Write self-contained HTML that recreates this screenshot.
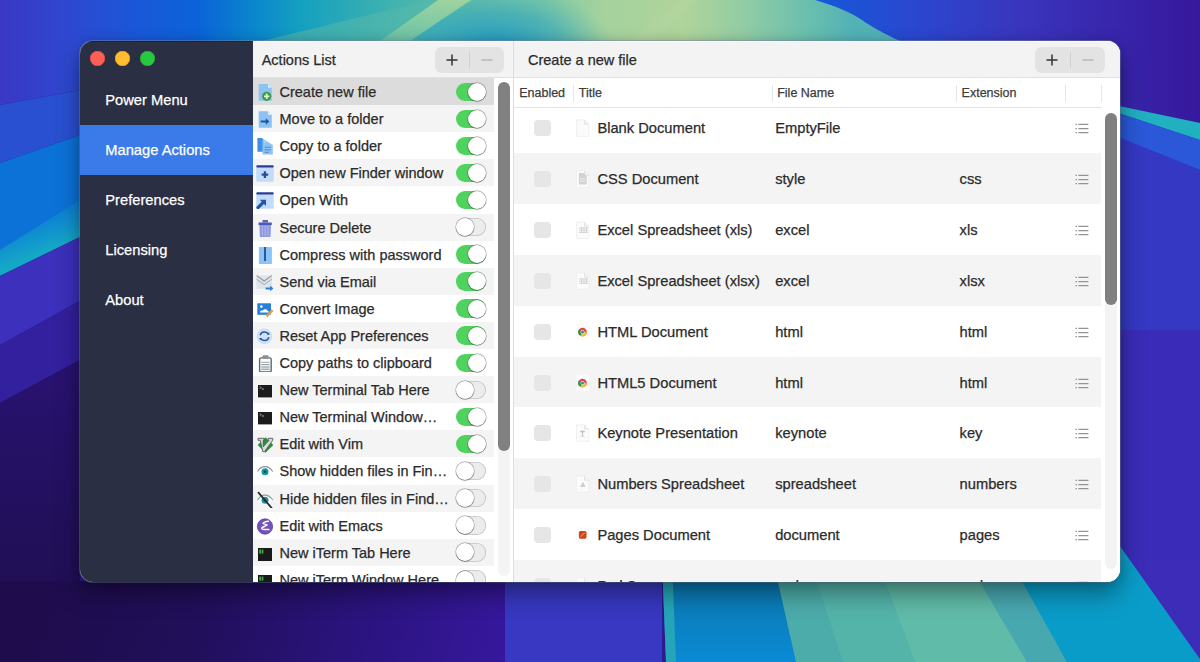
<!DOCTYPE html>
<html><head><meta charset="utf-8">
<style>
*{margin:0;padding:0;box-sizing:border-box}
html,body{width:1200px;height:662px;overflow:hidden;background:#2a1a90;font-family:"Liberation Sans",sans-serif}
.tx,.t,.htitle,.th .c,.si{-webkit-text-stroke:0.25px currentColor}
#bg{position:absolute;left:0;top:0;width:1200px;height:662px}
#win{position:absolute;left:80px;top:41px;width:1040px;height:541px;border-radius:13px;overflow:hidden;background:#fff;box-shadow:0 12px 24px rgba(0,0,0,.38),0 0 10px rgba(0,0,0,.15),0 0 0 1px rgba(140,160,190,.45)}
#side{position:absolute;left:0;top:0;width:173px;height:541px;background:#2a2f43;box-shadow:inset 0 1px 0 #1d2233}
.tl{position:absolute;top:10px;width:15px;height:15px;border-radius:50%}
.si{position:absolute;left:0;width:173px;height:50px;color:#fff;font-size:14.7px;line-height:20px;padding:15px 0 0 25.3px}
.si.sel{background:#3b7be9}
#act{position:absolute;left:173px;top:0;width:260px;height:541px;background:#fff}
.hdr{position:absolute;left:0;top:0;height:37px;background:#f3f3f3;border-bottom:1px solid #e0e0e0;box-shadow:inset 0 1px 0 #fcfcfc}
.htitle{position:absolute;top:8.5px;font-size:14.5px;line-height:20px;color:#2b2b2b}
.btns{position:absolute;top:6.3px;width:69.5px;height:25.7px;border-radius:6.5px;background:#e3e3e3}
.btns .dv{position:absolute;left:34.5px;top:4.5px;width:1px;height:16px;background:#cfcfcf}
.row{position:absolute;left:0;width:241px;height:27px}
.row .ic{position:absolute;left:3px;top:4px;width:19px;height:19px}
.row .tx{position:absolute;left:26.5px;top:4px;font-size:14.5px;line-height:20px;color:#2b2b2b;white-space:nowrap}
.tg{position:absolute;left:203px;top:4.6px;width:30px;height:18.4px;border-radius:9.2px}
.tg.on{background:#4fd35e}
.tg.off{background:#ececec;box-shadow:inset 0 0 0 0.8px #c2c2c2}
.tg .kn{position:absolute;top:0.2px;width:18px;height:18px;border-radius:50%;background:#fff;box-shadow:0 0.6px 0.8px rgba(0,0,0,.35),0 0 0 0.7px rgba(0,0,0,.28)}
.tg.on .kn{left:11.8px}
.tg.off .kn{left:0.2px}
#div{position:absolute;left:433px;top:0;width:1px;height:541px;background:#dedede}
#rp{position:absolute;left:434px;top:0;width:606px;height:541px;background:#fff}
.th{position:absolute;top:36.5px;left:0;width:606px;height:30px;background:#fff}
.th .bb{position:absolute;left:0;top:29.5px;width:588px;height:1px;background:#e4e4e4}
.th .c{position:absolute;top:7px;font-size:12.5px;line-height:16px;color:#3c3c3c}
.th .sp{position:absolute;top:7px;width:1px;height:17px;background:#e6e6e6}
.tr{position:absolute;left:0;width:587px;height:51px}
.tr .cb{position:absolute;left:19.75px;top:17.5px;width:17.5px;height:16.5px;border-radius:4px;background:#e6e6e6}
.tr .fi{position:absolute;left:62px;top:17px;width:14px;height:18px}
.tr .t{position:absolute;top:15.9px;font-size:14.7px;line-height:20px;color:#2b2b2b;white-space:nowrap}
.tr .li{position:absolute;left:560px;top:20px;width:16px;height:12px}
</style></head><body>
<svg id="bg" width="1200" height="662" viewBox="0 0 1200 662">
<defs>
<linearGradient id="gtop" x1="0" y1="0" x2="1200" y2="0" gradientUnits="userSpaceOnUse">
<stop offset="0" stop-color="#3a38c4"/>
<stop offset="0.058" stop-color="#2e48d0"/>
<stop offset="0.108" stop-color="#1c56d8"/>
<stop offset="0.167" stop-color="#0a64d8"/>
<stop offset="0.208" stop-color="#0a84ce"/>
<stop offset="0.25" stop-color="#14a0c0"/>
<stop offset="0.292" stop-color="#2caab6"/>
<stop offset="0.333" stop-color="#44b4ae"/>
<stop offset="0.39" stop-color="#62bea8"/>
<stop offset="0.45" stop-color="#78c6a6"/>
<stop offset="0.5" stop-color="#a4d29e"/>
<stop offset="0.57" stop-color="#b0d49a"/>
<stop offset="0.62" stop-color="#92cca4"/>
<stop offset="0.67" stop-color="#6cc0ae"/>
<stop offset="0.71" stop-color="#52b2b6"/>
<stop offset="1" stop-color="#40a8bc"/>
</linearGradient>
<linearGradient id="gblue" x1="815" y1="0" x2="1200" y2="0" gradientUnits="userSpaceOnUse">
<stop offset="0" stop-color="#1458d8"/>
<stop offset="0.25" stop-color="#2a48d0"/>
<stop offset="0.55" stop-color="#3a34bc"/>
<stop offset="1" stop-color="#36189c"/>
</linearGradient>
<radialGradient id="gwedge" cx="495" cy="48" r="120" gradientTransform="translate(0,24) scale(1,0.5)" gradientUnits="userSpaceOnUse">
<stop offset="0" stop-color="#1a94c4" stop-opacity="0.95"/>
<stop offset="0.6" stop-color="#2aa0c0" stop-opacity="0.5"/>
<stop offset="1" stop-color="#40b0b8" stop-opacity="0"/>
</radialGradient>
<linearGradient id="gbot" x1="40" y1="560" x2="505" y2="720" gradientUnits="userSpaceOnUse">
<stop offset="0" stop-color="#1e0c4c"/>
<stop offset="0.35" stop-color="#210f5a"/>
<stop offset="0.7" stop-color="#2c1482"/>
<stop offset="1" stop-color="#3818a2"/>
</linearGradient>
<linearGradient id="gblu2" x1="0" y1="581" x2="0" y2="662" gradientUnits="userSpaceOnUse">
<stop offset="0" stop-color="#0a78b0"/>
<stop offset="1" stop-color="#0a8ad4"/>
</linearGradient>
<linearGradient id="gshadow" x1="0" y1="581" x2="0" y2="630" gradientUnits="userSpaceOnUse">
<stop offset="0" stop-color="#000" stop-opacity="0.2"/>
<stop offset="1" stop-color="#000" stop-opacity="0"/>
</linearGradient>
<linearGradient id="gband" x1="0" y1="0" x2="0" y2="41" gradientUnits="userSpaceOnUse"><stop offset="0" stop-color="#a6d69e" stop-opacity="0.9"/><stop offset="1" stop-color="#86cca2" stop-opacity="0.6"/></linearGradient>
<linearGradient id="gleftb" x1="0" y1="380" x2="0" y2="662" gradientUnits="userSpaceOnUse"><stop offset="0" stop-color="#28126e"/><stop offset="0.5" stop-color="#22105c"/><stop offset="1" stop-color="#1f0d4e"/></linearGradient>
<linearGradient id="gteal" x1="30" y1="215" x2="44" y2="252" gradientUnits="userSpaceOnUse"><stop offset="0" stop-color="#0c78d8"/><stop offset="1" stop-color="#14a8c6"/></linearGradient>
<linearGradient id="gleft" x1="0" y1="0" x2="0" y2="110" gradientUnits="userSpaceOnUse">
<stop offset="0" stop-color="#3a38c6"/>
<stop offset="1" stop-color="#3a3ac2"/>
</linearGradient>
</defs>
<rect x="0" y="0" width="1200" height="662" fill="#2a1a90"/>
<!-- top strip -->
<rect x="0" y="0" width="1200" height="60" fill="url(#gtop)"/>
<polygon points="262,41 430,0 440,0 380,41" fill="#58b8aa" opacity="0.55"/>
<polygon points="438,0 472,0 410,41 380,41" fill="url(#gband)"/>
<polygon points="410,41 470,0 620,0 620,41" fill="url(#gwedge)"/>
<polygon points="680,0 700,0 650,41 630,41" fill="#b8d8a0" opacity="0.35"/>
<path d="M815,0 C835,6 850,12 862,20 C872,27 885,34 900,41 L905,60 L1200,60 L1200,0 Z" fill="url(#gblue)"/>
<!-- left strip -->
<rect x="0" y="41" width="80" height="621" fill="#231260"/>
<polygon points="0,0 80,0 80,90 0,105" fill="url(#gtop)"/>
<polygon points="0,105 80,90 80,135 0,163" fill="#2a50d2"/>
<polygon points="0,163 80,135 80,212 0,262" fill="#0c72d8"/>
<polygon points="0,250 80,200 80,237 0,276" fill="url(#gteal)"/>
<polygon points="0,276 80,237 80,301 0,345" fill="#3c30bc"/>
<polygon points="0,345 80,301 80,360 0,403" fill="#33209e"/>
<polygon points="0,403 80,360 80,450 0,500" fill="#26126c"/>
<!-- right strip -->
<rect x="1100" y="41" width="100" height="621" fill="#3a2cb8"/>
<polygon points="1100,30 1200,30 1200,123 1100,102" fill="url(#gblue)"/>
<polygon points="1100,102 1200,123 1200,140 1100,107" fill="#20b0c0"/>
<polygon points="1100,107 1200,140 1200,170 1100,130" fill="#2a58d8"/>
<polygon points="1100,130 1200,170 1200,330 1100,330" fill="#3538c2"/>
<polygon points="1100,518 1200,659 1200,662 1100,662" fill="#10a0c8"/>
<!-- bottom strip -->
<rect x="0" y="581" width="505" height="81" fill="url(#gbot)"/><polygon points="0,403 80,360 80,581 0,581" fill="url(#gleftb)"/>
<rect x="505" y="560" width="157" height="102" fill="#3838c2"/>
<polygon points="662,560 777,560 797,662 666,662" fill="url(#gblu2)"/>
<polygon points="662,560 672,560 676,662 666,662" fill="#24a6b8"/>
<polygon points="773,560 1012,560 1067,662 796,662" fill="#4cacaa"/>
<polygon points="810,560 877,560 915,662 843,662" fill="#54b4aa"/>
<polygon points="877,560 967,560 1027,662 915,662" fill="#60bba8"/>
<polygon points="967,560 1012,560 1067,662 1027,662" fill="#48a8b0"/>
<polygon points="1010,560 1130,560 1200,659 1200,662 1067,662" fill="#0a9cc8"/>
<polygon points="1130,560 1200,560 1200,659" fill="#3c2cb8"/>

</svg>

<div id="win">
  <div id="side">
    <div class="tl" style="left:9.5px;background:#fe5f57;box-shadow:inset 0 0 0 0.6px #d8473f"></div>
    <div class="tl" style="left:34.5px;background:#febc2e;box-shadow:inset 0 0 0 0.6px #d69a1d"></div>
    <div class="tl" style="left:59.5px;background:#28c840;box-shadow:inset 0 0 0 0.6px #1ea232"></div>
    <div class="si" style="top:34px">Power Menu</div>
    <div class="si sel" style="top:84px">Manage Actions</div>
    <div class="si" style="top:134px">Preferences</div>
    <div class="si" style="top:184px">Licensing</div>
    <div class="si" style="top:234px">About</div>
  </div>
  <div id="act">
    <div class="hdr" style="width:260px">
      <div class="htitle" style="left:8.7px">Actions List</div>
      <div class="btns" style="left:181.6px"><div class="dv"></div>
        <svg style="position:absolute;left:11.2px;top:6.7px" width="12" height="12"><path d="M6 0.5V11.5M0.5 6H11.5" stroke="#333" stroke-width="1.5"/></svg>
        <svg style="position:absolute;left:46.5px;top:6.7px" width="12" height="12"><path d="M0.5 6H11.5" stroke="#b8b8b8" stroke-width="1.5"/></svg>
      </div>
    </div>
    <div id="rows"><div class="row" style="top:37.0px;background:#dcdcdc"><svg class="ic" viewBox="0 0 19 19" width="19" height="19"><path d="M2.7 2H12L15.8 5.8V18.7H2.7Z" fill="#8ec2f2"/><path d="M12 2V5.8H15.8Z" fill="#d6ecfc"/><circle cx="10.7" cy="14.3" r="4.6" fill="#3b9a43"/><path d="M10.7 11.6V17M8 14.3H13.4" stroke="#dcf8d2" stroke-width="1.7"/></svg><div class="tx">Create new file</div><div class="tg on"><div class="kn"></div></div></div>
<div class="row" style="top:64.1px;background:#f4f4f4"><svg class="ic" viewBox="0 0 19 19" width="19" height="19"><path d="M2.7 2.3H12L15.8 6.1V18.7H2.7Z" fill="#8ec2f2"/><path d="M12 2.3V6.1H15.8Z" fill="#d6ecfc"/><path d="M4.7 12.5H10.5" stroke="#1a58a8" stroke-width="2"/><path d="M9.8 9.3L13.4 12.5L9.8 15.7Z" fill="#1a58a8"/></svg><div class="tx">Move to a folder</div><div class="tg on"><div class="kn"></div></div></div>
<div class="row" style="top:91.2px;background:#ffffff"><svg class="ic" viewBox="0 0 19 19" width="19" height="19"><path d="M1.4 2H6L11 7V15.8H1.4Z" fill="#3f90e6"/><path d="M6.5 3.5H8L16.8 9V18.6H6.5Z" fill="#8cc4f4"/><path d="M8 5L10 6.5L8 6.5Z" fill="#d6ecfc"/><path d="M8.5 11.2H15M8.5 13.8H15M8.5 16.3H13" stroke="#5a88c8" stroke-width="1"/></svg><div class="tx">Copy to a folder</div><div class="tg on"><div class="kn"></div></div></div>
<div class="row" style="top:118.3px;background:#f4f4f4"><svg class="ic" viewBox="0 0 19 19" width="19" height="19"><rect x="0.3" y="3.5" width="17.4" height="15.2" fill="#c2dbf8"/><rect x="0.3" y="2.2" width="17.4" height="2.3" rx="1" fill="#2b3c94"/><path d="M8.9 8.3V14.9M5.6 11.6H12.2" stroke="#2b4a9c" stroke-width="2.3"/></svg><div class="tx">Open new Finder window</div><div class="tg on"><div class="kn"></div></div></div>
<div class="row" style="top:145.4px;background:#ffffff"><svg class="ic" viewBox="0 0 19 19" width="19" height="19"><rect x="0.3" y="3.5" width="17.4" height="15.2" fill="#c2dbf8"/><rect x="0.3" y="2.2" width="17.4" height="2.3" rx="1" fill="#2b3c94"/><path d="M2 17.6L7.8 11.8" stroke="#1a5aa6" stroke-width="3.2" stroke-linecap="round"/><path d="M3.8 9.8H10V16Z" fill="#1a5aa6"/></svg><div class="tx">Open With</div><div class="tg on"><div class="kn"></div></div></div>
<div class="row" style="top:172.5px;background:#f4f4f4"><svg class="ic" viewBox="0 0 19 19" width="19" height="19"><path d="M6.5 2H12V4.5H6.5Z" fill="#5a66b8"/><path d="M2.5 4.5H15.8V7H2.5Z" fill="#4c58b4"/><path d="M3.4 7H15L14.5 19H3.9Z" fill="#8e97df"/><path d="M6.5 8V18M9.2 8V18M11.9 8V18" stroke="#aeb5ee" stroke-width="1"/></svg><div class="tx">Secure Delete</div><div class="tg off"><div class="kn"></div></div></div>
<div class="row" style="top:199.6px;background:#ffffff"><svg class="ic" viewBox="0 0 19 19" width="19" height="19"><rect x="2.9" y="2" width="13" height="17" rx="0.6" fill="#8cc4f4"/><rect x="8" y="2" width="2" height="14" fill="#2a5a9c"/></svg><div class="tx">Compress with password</div><div class="tg on"><div class="kn"></div></div></div>
<div class="row" style="top:226.7px;background:#f4f4f4"><svg class="ic" viewBox="0 0 19 19" width="19" height="19"><path d="M0.4 3.4H16V16.8H0.4Z" fill="#dde4ec"/><path d="M0.6 3.6L8.2 9L15.8 3.6" stroke="#8e959e" stroke-width="1.1" fill="none"/><path d="M0.6 7.2L8.2 12.6L15.8 7.2" stroke="#a0a6ae" stroke-width="1" fill="none"/><path d="M9.6 16.5H15" stroke="#2a80d8" stroke-width="2"/><path d="M14.2 13.6L17.4 16.5L14.2 19.2Z" fill="#2a80d8"/></svg><div class="tx">Send via Email</div><div class="tg on"><div class="kn"></div></div></div>
<div class="row" style="top:253.8px;background:#ffffff"><svg class="ic" viewBox="0 0 19 19" width="19" height="19"><rect x="1.3" y="4.3" width="13.7" height="11.5" fill="#2a7fd8"/><circle cx="5.4" cy="7.6" r="1.3" fill="#e8f6ff"/><path d="M4 13.5C4 11.8 5.5 11.3 6.6 11.8C7.4 9.8 10.6 9.6 11.5 11.7C12.8 11.7 13 13.5 12 13.5Z" fill="#fff"/><path d="M10.5 17.3L16.6 11.2" stroke="#e6a234" stroke-width="2.6"/></svg><div class="tx">Convert Image</div><div class="tg on"><div class="kn"></div></div></div>
<div class="row" style="top:280.9px;background:#f4f4f4"><svg class="ic" viewBox="0 0 19 19" width="19" height="19"><circle cx="8.5" cy="10.3" r="7.4" fill="#d2e3f8" stroke="#b9d1f1" stroke-width="0.6"/><path d="M4.1 9.3A4.5 4.5 0 0 1 12.5 8.6M12.9 11.3A4.5 4.5 0 0 1 4.5 12" stroke="#2f5ca8" stroke-width="1.5" fill="none"/><path d="M11.3 8.6L13.8 8.6L12.9 6.2Z M5.7 12L3.2 12L4.1 14.4Z" fill="#2f5ca8"/></svg><div class="tx">Reset App Preferences</div><div class="tg on"><div class="kn"></div></div></div>
<div class="row" style="top:308.0px;background:#ffffff"><svg class="ic" viewBox="0 0 19 19" width="19" height="19"><rect x="3.6" y="4.9" width="11.6" height="14" rx="1.5" fill="#fbfcfd" stroke="#63676b" stroke-width="1.4"/><rect x="6.5" y="2.3" width="6" height="3.4" rx="1" fill="#8a8e92"/><rect x="5.2" y="12.5" width="8.4" height="5" fill="#dde4e8"/><path d="M5.3 9.3H13.5M5.3 11.5H13.5M5.3 14H13.5M5.3 16.3H13.5" stroke="#8d9aa0" stroke-width="0.9"/></svg><div class="tx">Copy paths to clipboard</div><div class="tg on"><div class="kn"></div></div></div>
<div class="row" style="top:335.1px;background:#f4f4f4"><svg class="ic" viewBox="0 0 19 19" width="19" height="19"><rect x="2" y="5" width="14" height="12.4" fill="#1c1c1c"/><path d="M3.6 6.5L5.4 7.6L3.6 8.7" stroke="#9a9a9a" stroke-width="0.9" fill="none"/><path d="M5.8 9H7.8" stroke="#bdbdbd" stroke-width="1"/></svg><div class="tx">New Terminal Tab Here</div><div class="tg off"><div class="kn"></div></div></div>
<div class="row" style="top:362.2px;background:#ffffff"><svg class="ic" viewBox="0 0 19 19" width="19" height="19"><rect x="2" y="5" width="14" height="12.4" fill="#1c1c1c"/><path d="M3.6 6.5L5.4 7.6L3.6 8.7" stroke="#9a9a9a" stroke-width="0.9" fill="none"/><path d="M5.8 9H7.8" stroke="#bdbdbd" stroke-width="1"/></svg><div class="tx">New Terminal Window…</div><div class="tg on"><div class="kn"></div></div></div>
<div class="row" style="top:389.3px;background:#f4f4f4"><svg class="ic" viewBox="0 0 19 19" width="19" height="19"><path d="M9.5 3.2L17.3 11L9.5 18.8L1.7 11Z" fill="#23923a"/><path d="M2 4.3H8V6.3H7.2V12.8L13 6.3H12.2V4.3H16.8V6.2L8.6 17.6H6.8L4.2 6.3H2Z" fill="#d9dcd9" stroke="#5a5a5a" stroke-width="0.9" stroke-linejoin="round"/></svg><div class="tx">Edit with Vim</div><div class="tg on"><div class="kn"></div></div></div>
<div class="row" style="top:416.4px;background:#ffffff"><svg class="ic" viewBox="0 0 19 19" width="19" height="19"><path d="M1.5 10.5C3.5 7.2 6 5.6 9 5.6S14.5 7.2 16.8 10.5C14.5 13.8 12 15.2 9 15.2S3.5 13.8 1.5 10.5Z" fill="#fff"/><path d="M1.5 10.5C3.5 7.2 6 5.6 9 5.6S14.5 7.2 16.8 10.5" stroke="#8c8f92" stroke-width="1.1" fill="none"/><circle cx="9" cy="10.8" r="3.5" fill="#17969e"/><circle cx="9" cy="10.8" r="1.3" fill="#0b4a5e"/></svg><div class="tx">Show hidden files in Fin…</div><div class="tg off"><div class="kn"></div></div></div>
<div class="row" style="top:443.5px;background:#f4f4f4"><svg class="ic" viewBox="0 0 19 19" width="19" height="19"><path d="M1.5 11C3.5 7.7 6 6.1 9 6.1S14.5 7.7 16.8 11C14.5 14.3 12 15.7 9 15.7S3.5 14.3 1.5 11Z" fill="#fff"/><path d="M1.5 11C3.5 7.7 6 6.1 9 6.1S14.5 7.7 16.8 11" stroke="#7fa2a6" stroke-width="1.1" fill="none"/><circle cx="9" cy="11.2" r="3.5" fill="#17969e"/><circle cx="9" cy="11.2" r="1.3" fill="#0b4a5e"/><path d="M2.5 3.6L15.5 18.8" stroke="#262c34" stroke-width="1.8" stroke-linecap="round"/></svg><div class="tx">Hide hidden files in Find…</div><div class="tg off"><div class="kn"></div></div></div>
<div class="row" style="top:470.6px;background:#ffffff"><svg class="ic" viewBox="0 0 19 19" width="19" height="19"><circle cx="9" cy="10.5" r="7.7" fill="#7451bc" stroke="#5a3c98" stroke-width="0.7"/><path d="M12.5 5.3C10 5.6 6.5 6.5 7.2 7.6C8 8.6 11.8 8.2 10.8 9.2C9.5 10.4 5 11.2 5.8 12.6C6.8 14 11 13.4 12.8 13.6" stroke="#fff" stroke-width="1.5" fill="none" stroke-linecap="round"/></svg><div class="tx">Edit with Emacs</div><div class="tg off"><div class="kn"></div></div></div>
<div class="row" style="top:497.7px;background:#f4f4f4"><svg class="ic" viewBox="0 0 19 19" width="19" height="19"><rect x="2" y="5" width="14" height="13" fill="#1a1a1a"/><rect x="3.2" y="6.6" width="1.8" height="4" fill="#3faa45"/><rect x="5.6" y="6.6" width="1.8" height="4" fill="#3faa45"/></svg><div class="tx">New iTerm Tab Here</div><div class="tg off"><div class="kn"></div></div></div>
<div class="row" style="top:524.8px;background:#ffffff"><svg class="ic" viewBox="0 0 19 19" width="19" height="19"><rect x="2" y="5" width="14" height="13" fill="#1a1a1a"/><rect x="3.2" y="6.6" width="1.8" height="4" fill="#3faa45"/><rect x="5.6" y="6.6" width="1.8" height="4" fill="#3faa45"/></svg><div class="tx">New iTerm Window Here</div><div class="tg off"><div class="kn"></div></div></div></div>
    <div style="position:absolute;left:245px;top:40.7px;width:12px;height:494px;border-radius:6px;background:#f4f4f4"></div>
    <div style="position:absolute;left:245px;top:40.7px;width:12px;height:369px;border-radius:6px;background:#808080"></div>
  </div>
  <div id="div"></div>
  <div id="rp">
    <div class="tr" style="top:61px;background:#ffffff"><div class="cb"></div><svg class="fi" viewBox="0 0 14 18" width="14" height="18"><path d="M0.4 0.9H8.5L12.8 5.2V17.3H0.4Z" fill="#fbfbfb" stroke="#ececec" stroke-width="0.8"/><path d="M8.5 0.9V5.2H12.8" fill="#f2f2f2" stroke="#e0e0e0" stroke-width="0.8"/></svg><div class="t" style="left:83.4px">Blank Document</div><div class="t" style="left:261.2px">EmptyFile</div><div class="t" style="left:445.6px"></div><svg class="li" viewBox="0 0 16 12" width="16" height="12"><path d="M1.5 2.4H2.9M1.5 6.6H2.9M1.5 10.6H2.9" stroke="#8e8e8e" stroke-width="1.4"/><path d="M4.4 2.4H14.4M4.4 6.6H14.4M4.4 10.6H14.4" stroke="#939393" stroke-width="1.4"/></svg></div>
<div class="tr" style="top:112px;background:#f4f4f4"><div class="cb"></div><svg class="fi" viewBox="0 0 14 18" width="14" height="18"><path d="M0.4 0.9H8.5L12.8 5.2V17.3H0.4Z" fill="#fbfbfb" stroke="#ececec" stroke-width="0.8"/><path d="M8.5 0.9V5.2H12.8" fill="#f2f2f2" stroke="#e0e0e0" stroke-width="0.8"/><path d="M2.9 3H7.5L10.7 6.2V14.5H2.9Z" fill="#d2d2d2"/><path d="M4 9H9.5M4 11.3H9.5" stroke="#f2f2f2" stroke-width="0.8"/></svg><div class="t" style="left:83.4px">CSS Document</div><div class="t" style="left:261.2px">style</div><div class="t" style="left:445.6px">css</div><svg class="li" viewBox="0 0 16 12" width="16" height="12"><path d="M1.5 2.4H2.9M1.5 6.6H2.9M1.5 10.6H2.9" stroke="#8e8e8e" stroke-width="1.4"/><path d="M4.4 2.4H14.4M4.4 6.6H14.4M4.4 10.6H14.4" stroke="#939393" stroke-width="1.4"/></svg></div>
<div class="tr" style="top:163px;background:#ffffff"><div class="cb"></div><svg class="fi" viewBox="0 0 14 18" width="14" height="18"><path d="M0.4 0.9H8.5L12.8 5.2V17.3H0.4Z" fill="#fbfbfb" stroke="#ececec" stroke-width="0.8"/><path d="M8.5 0.9V5.2H12.8" fill="#f2f2f2" stroke="#e0e0e0" stroke-width="0.8"/><path d="M3 7H12M3 9.2H12M3 11.4H12M5.5 6V12M8 6V12M10.5 6V12" stroke="#d4d4d4" stroke-width="1"/></svg><div class="t" style="left:83.4px">Excel Spreadsheet (xls)</div><div class="t" style="left:261.2px">excel</div><div class="t" style="left:445.6px">xls</div><svg class="li" viewBox="0 0 16 12" width="16" height="12"><path d="M1.5 2.4H2.9M1.5 6.6H2.9M1.5 10.6H2.9" stroke="#8e8e8e" stroke-width="1.4"/><path d="M4.4 2.4H14.4M4.4 6.6H14.4M4.4 10.6H14.4" stroke="#939393" stroke-width="1.4"/></svg></div>
<div class="tr" style="top:214px;background:#f4f4f4"><div class="cb"></div><svg class="fi" viewBox="0 0 14 18" width="14" height="18"><path d="M0.4 0.9H8.5L12.8 5.2V17.3H0.4Z" fill="#fbfbfb" stroke="#ececec" stroke-width="0.8"/><path d="M8.5 0.9V5.2H12.8" fill="#f2f2f2" stroke="#e0e0e0" stroke-width="0.8"/><path d="M3 7H12M3 9.2H12M3 11.4H12M5.5 6V12M8 6V12M10.5 6V12" stroke="#d4d4d4" stroke-width="1"/></svg><div class="t" style="left:83.4px">Excel Spreadsheet (xlsx)</div><div class="t" style="left:261.2px">excel</div><div class="t" style="left:445.6px">xlsx</div><svg class="li" viewBox="0 0 16 12" width="16" height="12"><path d="M1.5 2.4H2.9M1.5 6.6H2.9M1.5 10.6H2.9" stroke="#8e8e8e" stroke-width="1.4"/><path d="M4.4 2.4H14.4M4.4 6.6H14.4M4.4 10.6H14.4" stroke="#939393" stroke-width="1.4"/></svg></div>
<div class="tr" style="top:265px;background:#ffffff"><div class="cb"></div><svg class="fi" viewBox="0 0 14 18" width="14" height="18"><rect x="0.5" y="1" width="12.5" height="16" fill="#fbfbfb"/><circle cx="6.5" cy="9" r="4.3" fill="#dc4a38"/><path d="M6.5 9L2.8 6.8A4.3 4.3 0 0 0 4.4 12.8Z" fill="#1e9a4a"/><path d="M6.5 9L4.4 12.8A4.3 4.3 0 0 0 10.8 9.2Z" fill="#f2c12e"/><circle cx="6.5" cy="9" r="2" fill="#fff"/><circle cx="6.5" cy="9" r="1.5" fill="#3b76d6"/></svg><div class="t" style="left:83.4px">HTML Document</div><div class="t" style="left:261.2px">html</div><div class="t" style="left:445.6px">html</div><svg class="li" viewBox="0 0 16 12" width="16" height="12"><path d="M1.5 2.4H2.9M1.5 6.6H2.9M1.5 10.6H2.9" stroke="#8e8e8e" stroke-width="1.4"/><path d="M4.4 2.4H14.4M4.4 6.6H14.4M4.4 10.6H14.4" stroke="#939393" stroke-width="1.4"/></svg></div>
<div class="tr" style="top:316px;background:#f4f4f4"><div class="cb"></div><svg class="fi" viewBox="0 0 14 18" width="14" height="18"><rect x="0.5" y="1" width="12.5" height="16" fill="#fbfbfb"/><circle cx="6.5" cy="9" r="4.3" fill="#dc4a38"/><path d="M6.5 9L2.8 6.8A4.3 4.3 0 0 0 4.4 12.8Z" fill="#1e9a4a"/><path d="M6.5 9L4.4 12.8A4.3 4.3 0 0 0 10.8 9.2Z" fill="#f2c12e"/><circle cx="6.5" cy="9" r="2" fill="#fff"/><circle cx="6.5" cy="9" r="1.5" fill="#3b76d6"/></svg><div class="t" style="left:83.4px">HTML5 Document</div><div class="t" style="left:261.2px">html</div><div class="t" style="left:445.6px">html</div><svg class="li" viewBox="0 0 16 12" width="16" height="12"><path d="M1.5 2.4H2.9M1.5 6.6H2.9M1.5 10.6H2.9" stroke="#8e8e8e" stroke-width="1.4"/><path d="M4.4 2.4H14.4M4.4 6.6H14.4M4.4 10.6H14.4" stroke="#939393" stroke-width="1.4"/></svg></div>
<div class="tr" style="top:366px;background:#ffffff"><div class="cb"></div><svg class="fi" viewBox="0 0 14 18" width="14" height="18"><path d="M0.4 0.9H8.5L12.8 5.2V17.3H0.4Z" fill="#fbfbfb" stroke="#ececec" stroke-width="0.8"/><path d="M8.5 0.9V5.2H12.8" fill="#f2f2f2" stroke="#e0e0e0" stroke-width="0.8"/><path d="M6.5 6V12M4 7.6H9" stroke="#c4c4c4" stroke-width="1.2"/><path d="M4.5 12.5H8.5" stroke="#dcdcdc" stroke-width="1"/></svg><div class="t" style="left:83.4px">Keynote Presentation</div><div class="t" style="left:261.2px">keynote</div><div class="t" style="left:445.6px">key</div><svg class="li" viewBox="0 0 16 12" width="16" height="12"><path d="M1.5 2.4H2.9M1.5 6.6H2.9M1.5 10.6H2.9" stroke="#8e8e8e" stroke-width="1.4"/><path d="M4.4 2.4H14.4M4.4 6.6H14.4M4.4 10.6H14.4" stroke="#939393" stroke-width="1.4"/></svg></div>
<div class="tr" style="top:417px;background:#f4f4f4"><div class="cb"></div><svg class="fi" viewBox="0 0 14 18" width="14" height="18"><path d="M0.4 0.9H8.5L12.8 5.2V17.3H0.4Z" fill="#fbfbfb" stroke="#ececec" stroke-width="0.8"/><path d="M8.5 0.9V5.2H12.8" fill="#f2f2f2" stroke="#e0e0e0" stroke-width="0.8"/><path d="M4 12L7 6.5L9.5 12Z" fill="#cdcdcd"/></svg><div class="t" style="left:83.4px">Numbers Spreadsheet</div><div class="t" style="left:261.2px">spreadsheet</div><div class="t" style="left:445.6px">numbers</div><svg class="li" viewBox="0 0 16 12" width="16" height="12"><path d="M1.5 2.4H2.9M1.5 6.6H2.9M1.5 10.6H2.9" stroke="#8e8e8e" stroke-width="1.4"/><path d="M4.4 2.4H14.4M4.4 6.6H14.4M4.4 10.6H14.4" stroke="#939393" stroke-width="1.4"/></svg></div>
<div class="tr" style="top:468px;background:#ffffff"><div class="cb"></div><svg class="fi" viewBox="0 0 14 18" width="14" height="18"><rect x="0.5" y="1" width="12.5" height="16" fill="#fbfbfb"/><rect x="2.9" y="5" width="7.6" height="7.7" rx="1.6" fill="#c8461a"/><path d="M4.6 10.7L8.8 6.6" stroke="#ff7438" stroke-width="1.4"/></svg><div class="t" style="left:83.4px">Pages Document</div><div class="t" style="left:261.2px">document</div><div class="t" style="left:445.6px">pages</div><svg class="li" viewBox="0 0 16 12" width="16" height="12"><path d="M1.5 2.4H2.9M1.5 6.6H2.9M1.5 10.6H2.9" stroke="#8e8e8e" stroke-width="1.4"/><path d="M4.4 2.4H14.4M4.4 6.6H14.4M4.4 10.6H14.4" stroke="#939393" stroke-width="1.4"/></svg></div>
<div class="tr" style="top:519px;background:#f4f4f4"><div class="cb"></div><svg class="fi" viewBox="0 0 14 18" width="14" height="18"><path d="M0.4 0.9H8.5L12.8 5.2V17.3H0.4Z" fill="#fbfbfb" stroke="#ececec" stroke-width="0.8"/><path d="M8.5 0.9V5.2H12.8" fill="#f2f2f2" stroke="#e0e0e0" stroke-width="0.8"/></svg><div class="t" style="left:83.4px">Psd Source</div><div class="t" style="left:261.2px">psd</div><div class="t" style="left:445.6px">psd</div><svg class="li" viewBox="0 0 16 12" width="16" height="12"><path d="M1.5 2.4H2.9M1.5 6.6H2.9M1.5 10.6H2.9" stroke="#8e8e8e" stroke-width="1.4"/><path d="M4.4 2.4H14.4M4.4 6.6H14.4M4.4 10.6H14.4" stroke="#939393" stroke-width="1.4"/></svg></div>
    <div style="position:absolute;left:591px;top:72px;width:12px;height:456px;border-radius:6px;background:#f3f3f3"></div>
    <div style="position:absolute;left:591px;top:72px;width:12px;height:192px;border-radius:6px;background:#808080"></div>
    <div class="th"><div class="bb"></div>
      <div class="c" style="left:5.2px">Enabled</div><div class="sp" style="left:58.5px"></div>
      <div class="c" style="left:64.8px">Title</div><div class="sp" style="left:258px"></div>
      <div class="c" style="left:263.2px">File Name</div><div class="sp" style="left:442px"></div>
      <div class="c" style="left:447.6px">Extension</div><div class="sp" style="left:550.5px"></div>
      <div class="sp" style="left:587px"></div>
    </div>
    <div class="hdr" style="width:606px">
      <div class="htitle" style="left:14px">Create a new file</div>
      <div class="btns" style="left:521.1px"><div class="dv"></div>
        <svg style="position:absolute;left:11.2px;top:6.7px" width="12" height="12"><path d="M6 0.5V11.5M0.5 6H11.5" stroke="#333" stroke-width="1.5"/></svg>
        <svg style="position:absolute;left:46.5px;top:6.7px" width="12" height="12"><path d="M0.5 6H11.5" stroke="#b8b8b8" stroke-width="1.5"/></svg>
      </div>
    </div>
  </div>
</div>
</body></html>
